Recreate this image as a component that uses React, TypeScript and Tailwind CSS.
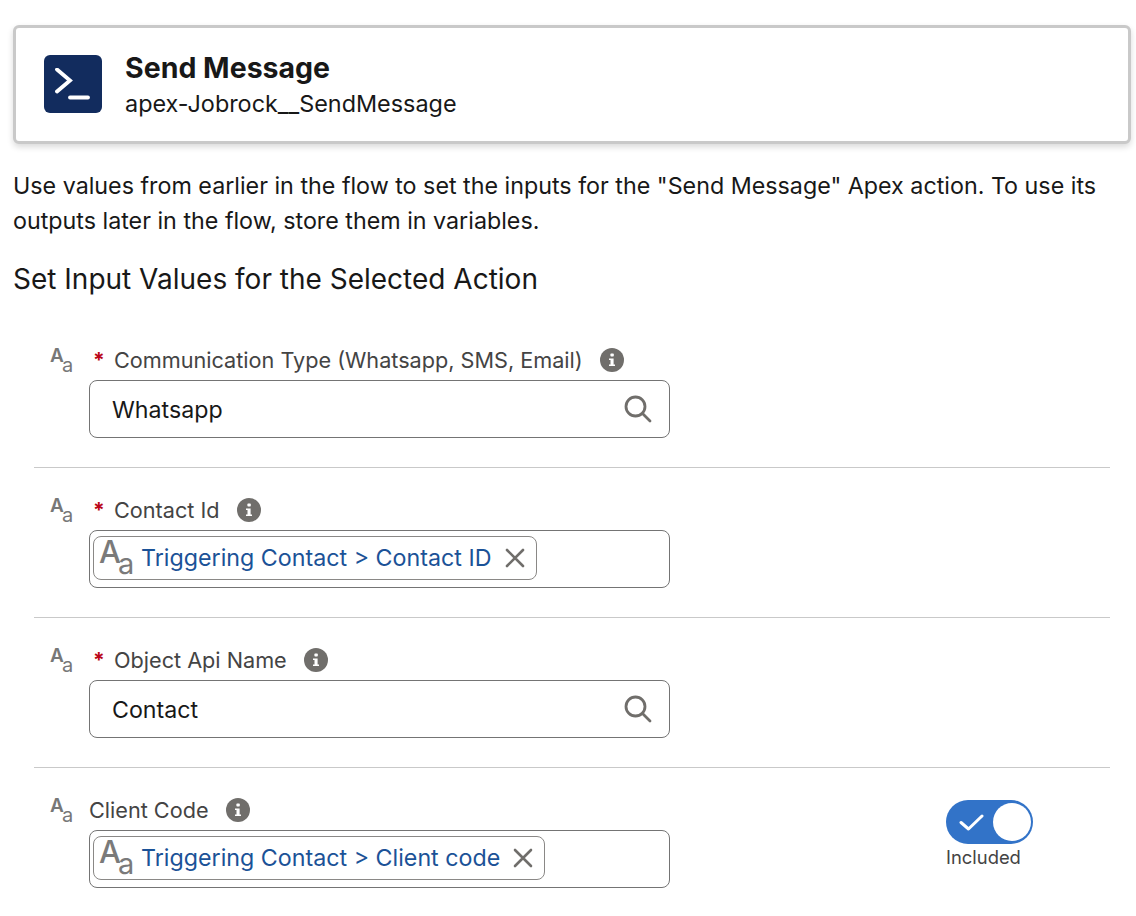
const font = "font-['Inter',sans-serif]";

function TypeIcon({ big }: { big?: boolean }) {
  // the "Aa" text-type glyph next to each field and inside each pill
  return big ? (
    <span className="relative block h-[44px] w-[37px] shrink-0 text-[#7a7a7a]">
      <span className="absolute left-[4px] top-[4px] text-[31px] leading-[24px] font-medium tracking-[-3px]">A</span>
      <span className="absolute left-[23px] top-[18px] text-[29px] leading-[20px]">a</span>
    </span>
  ) : (
    <span className="relative block h-[32px] w-[26px] shrink-0 text-[#777777]">
      <span className="absolute left-0 top-0 text-[19px] leading-[16px] font-semibold tracking-[-2px]">A</span>
      <span className="absolute left-[12px] top-[9px] text-[20px] leading-[16px]">a</span>
    </span>
  );
}

function InfoDot() {
  return (
    <span className="flex h-[24px] w-[24px] shrink-0 items-center justify-center rounded-full bg-[#706e6b]">
      <svg width="8" height="14" viewBox="0 0 8 14" fill="#fff">
        <rect x="2.4" y="0.6" width="3.4" height="3" rx="0.8" />
        <path d="M1 5.4h4.6v6H7v1.6H1v-1.6h1.5V7H1z" />
      </svg>
    </span>
  );
}

function SearchIcon() {
  return (
    <svg className="ml-auto" width="28" height="28" viewBox="0 0 28 28" fill="none" stroke="#706e6b" strokeWidth="2.8" strokeLinecap="round">
      <circle cx="11.5" cy="11.5" r="9.5" />
      <path d="M18.5 18.5 26 26" />
    </svg>
  );
}

function Pill({ text, w }: { text: string; w: string }) {
  return (
    <div className={`flex h-[44px] items-center rounded-[8px] border border-[#8a8886] pl-[1px] ${w}`}>
      <TypeIcon big />
      <span className="ml-[9px] text-[23.25px] leading-[30px] text-[#1b5297]">{text}</span>
      <svg className="ml-auto mr-[11px]" width="20" height="20" viewBox="0 0 20 20" fill="none" stroke="#706e6b" strokeWidth="2.6" strokeLinecap="round">
        <path d="M2 2 18 18M18 2 2 18" />
      </svg>
    </div>
  );
}

function Field({
  label,
  required,
  value,
  pill,
  pillW,
  divider,
}: {
  label: string;
  required?: boolean;
  value?: string;
  pill?: string;
  pillW?: string;
  divider?: boolean;
}) {
  return (
    <div className={`flex h-[150px] pt-[28px] ${divider ? "border-b border-[#c9c9c9]" : ""}`}>
      <div className="w-[55px] shrink-0 pl-[16px] pt-[2px]">
        <TypeIcon />
      </div>
      <div className="w-[581px] shrink-0">
        <div className="flex h-[30px] items-center pb-[2px]">
          {required && (
            <span className="w-[25px] pl-[4px] pt-[2px] text-[21px] leading-[26px] font-bold text-[#ba0517]">*</span>
          )}
          <span className="text-[21.65px] leading-[30px] text-[#444444]">{label}</span>
          <span className="ml-[17px]">
            <InfoDot />
          </span>
        </div>
        <div
          className={`mt-[4px] flex h-[58px] items-center rounded-[8px] border border-[#747474] ${
            pill ? "pb-[2px] pl-[3px]" : "pl-[22px] pr-[17px]"
          }`}
        >
          {pill ? (
            <Pill text={pill} w={pillW ?? ""} />
          ) : (
            <>
              <span className="mt-[2px] text-[23.2px] leading-[30px] text-[#181818]">{value}</span>
              <SearchIcon />
            </>
          )}
        </div>
      </div>
    </div>
  );
}

export default function App() {
  return (
    <div className={`${font} h-[916px] w-[1136px] overflow-hidden bg-white pl-[13px] pr-[5px] pt-[25px]`}>
      <div className="flex h-[119px] items-center rounded-[6px] border-[3px] border-[#c9c9c9] bg-white pb-[2px] pl-[28px] shadow-[0_3px_6px_rgba(0,0,0,0.15)]">
        <div className="flex h-[58px] w-[58px] items-center justify-center rounded-[6px] bg-[#122c5e]">
          <svg width="36" height="32" viewBox="0 0 36 32" fill="none" stroke="#fff" strokeWidth="3.8" strokeLinecap="round">
            <path d="M2 1.5 15 12.5 2 23.5" />
            <path d="M15 29.5H33" />
          </svg>
        </div>
        <div className="ml-[23px] pt-[2px]">
          <div className="text-[28.5px] leading-[36px] font-bold text-[#181818]">Send Message</div>
          <div className="mt-[2px] text-[23.4px] leading-[31px] text-[#181818]">apex-Jobrock__SendMessage</div>
        </div>
      </div>

      <p className="mt-[24px] text-[23.28px] leading-[35px] text-[#181818]">
        Use values from earlier in the flow to set the inputs for the "Send Message" Apex action. To use its
        <br />
        outputs later in the flow, store them in variables.
      </p>
      <h2 className="mt-[23px] text-[28px] leading-[36px] font-normal text-[#181818]">
        Set Input Values for the Selected Action
      </h2>

      <div className="ml-[21px] mt-[21px] w-[1076px]">
        <Field label="Communication Type (Whatsapp, SMS, Email)" required value="Whatsapp" divider />
        <Field label="Contact Id" required pill="Triggering Contact > Contact ID" pillW="w-[444px]" divider />
        <Field label="Object Api Name" required value="Contact" divider />
        <div className="flex items-start">
          <div className="w-[636px]">
            <Field label="Client Code" pill="Triggering Contact > Client code" pillW="w-[452px]" />
          </div>
          <div className="ml-[276px] mt-[32px] flex flex-col">
            <div className="relative flex h-[44px] w-[87px] items-center rounded-full bg-[#3273c8] pl-[13px]">
              <svg width="25" height="19" viewBox="0 0 25 19" fill="none" stroke="#fff" strokeWidth="3" strokeLinecap="round" strokeLinejoin="round">
                <path d="M2 9.5 9.5 16 23 3" />
              </svg>
              <span className="absolute right-[2px] top-[3px] h-[38px] w-[38px] rounded-full bg-white" />
            </div>
            <span className="mt-[1px] text-[18.4px] leading-[24px] text-[#444444]">Included</span>
          </div>
        </div>
      </div>
    </div>
  );
}
